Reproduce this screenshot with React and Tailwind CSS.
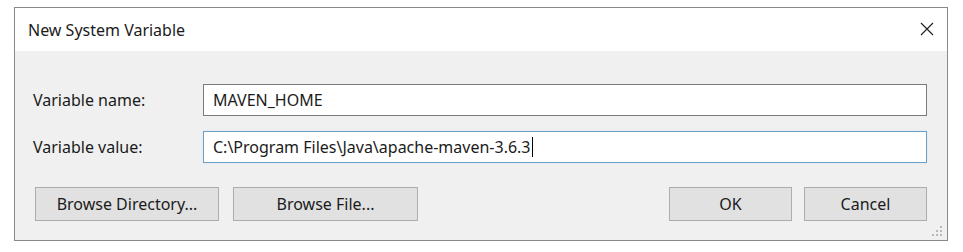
import React from "react";

export default function App() {
  const font = { fontFamily: '"Noto Sans", "Open Sans", sans-serif' };
  return (
    <div className="w-[963px] h-[252px] bg-white pt-[7px] pl-[14px]" style={font}>
      <div className="w-[934px] h-[234px] border border-[#8a8a8a] flex flex-col text-[#1b1b1b]">
        <div className="h-[43px] bg-white flex items-center justify-between pl-[13px] pr-[13px]">
          <span className="text-[16px]">New System Variable</span>
          <svg width="14" height="14" viewBox="0 0 14 14" className="mb-[1px]">
            <path d="M1 1 L13 13 M13 1 L1 13" stroke="#222" strokeWidth="1.2" fill="none" />
          </svg>
        </div>
        <div className="flex-1 bg-[#f0f0f0] flex flex-col pt-[33px] pr-[20px] pl-[18px] relative">
          <div className="flex items-center h-[32px]">
            <span className="w-[170px] text-[16px]">Variable name:</span>
            <div className="flex-1 h-[32px] bg-white border border-[#7a7a7a] flex items-center pl-[9px] text-[16px]">
              MAVEN_HOME
            </div>
          </div>
          <div className="flex items-center h-[32px] mt-[15px]">
            <span className="w-[170px] text-[16px]">Variable value:</span>
            <div className="flex-1 h-[32px] bg-white border border-[#6b9fc6] shadow-[0_0_2px_#cfe3f2] flex items-center pl-[9px] text-[16px]">
              <span>C:\Program Files\Java\apache-maven-3.6.3</span>
              <span className="inline-block w-[1px] h-[20px] bg-black ml-[1px]"></span>
            </div>
          </div>
          <div className="flex items-center mt-[24px] pl-[2px]">
            <button className="w-[184px] h-[34px] bg-[#e1e1e1] border border-[#adadad] text-[16px]">Browse Directory...</button>
            <button className="w-[185px] h-[34px] bg-[#e1e1e1] border border-[#adadad] text-[16px] ml-[14px]">Browse File...</button>
            <div className="flex-1" />
            <button className="w-[123px] h-[34px] bg-[#e1e1e1] border border-[#adadad] text-[16px]">OK</button>
            <button className="w-[123px] h-[34px] bg-[#e1e1e1] border border-[#adadad] text-[16px] ml-[12px]">Cancel</button>
          </div>
          <svg width="12" height="12" viewBox="0 0 12 12" className="absolute right-[4px] bottom-[3px]">
            <rect x="9" y="1" width="2" height="2" fill="#b8b8b8" />
            <rect x="5" y="5" width="2" height="2" fill="#b8b8b8" />
            <rect x="9" y="5" width="2" height="2" fill="#b8b8b8" />
            <rect x="1" y="9" width="2" height="2" fill="#b8b8b8" />
            <rect x="5" y="9" width="2" height="2" fill="#b8b8b8" />
            <rect x="9" y="9" width="2" height="2" fill="#b8b8b8" />
          </svg>
        </div>
      </div>
    </div>
  );
}
